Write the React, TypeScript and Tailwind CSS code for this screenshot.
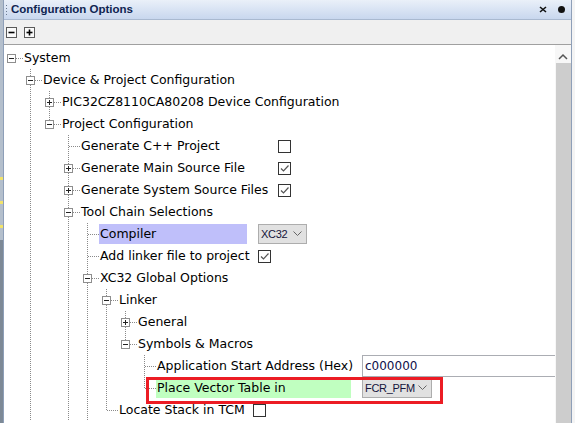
import React from 'react'

type Value =
  | { kind: 'check'; checked: boolean }
  | { kind: 'combo'; text: string; width: string }
  | { kind: 'field'; text: string }

interface TreeRow {
  label: string
  level: number
  lines: number[]
  last?: boolean
  toggle?: 'open' | 'closed'
  labelW?: string
  highlight?: string
  value?: Value
}

const rows: TreeRow[] = [
  { label: 'System', level: 0, lines: [], toggle: 'open' },
  { label: 'Device & Project Configuration', level: 1, lines: [], toggle: 'open' },
  { label: 'PIC32CZ8110CA80208 Device Configuration', level: 2, lines: [1], toggle: 'closed' },
  { label: 'Project Configuration', level: 2, lines: [1], toggle: 'open', last: true },
  { label: 'Generate C++ Project', level: 3, lines: [1], labelW: 'w-[187px]', value: { kind: 'check', checked: false } },
  { label: 'Generate Main Source File', level: 3, lines: [1], toggle: 'closed', labelW: 'w-[187px]', value: { kind: 'check', checked: true } },
  { label: 'Generate System Source Files', level: 3, lines: [1], toggle: 'closed', labelW: 'w-[187px]', value: { kind: 'check', checked: true } },
  { label: 'Tool Chain Selections', level: 3, lines: [1], toggle: 'open' },
  { label: 'Compiler', level: 4, lines: [1, 3], labelW: 'w-[148px]', highlight: 'bg-[#bfbffa]', value: { kind: 'combo', text: 'XC32', width: 'w-[49px]' } },
  { label: 'Add linker file to project', level: 4, lines: [1, 3], labelW: 'w-[148px]', value: { kind: 'check', checked: true } },
  { label: 'XC32 Global Options', level: 4, lines: [1, 3], toggle: 'open' },
  { label: 'Linker', level: 5, lines: [1, 3, 4], toggle: 'open' },
  { label: 'General', level: 6, lines: [1, 3, 4, 5], toggle: 'closed' },
  { label: 'Symbols & Macros', level: 6, lines: [1, 3, 4, 5], toggle: 'open', last: true },
  { label: 'Application Start Address (Hex)', level: 7, lines: [1, 3, 4, 5], labelW: 'w-[195px]', value: { kind: 'field', text: 'c000000' } },
  { label: 'Place Vector Table in', level: 7, lines: [1, 3, 4, 5], last: true, labelW: 'w-[195px]', highlight: 'bg-[#c0ffc0]', value: { kind: 'combo', text: 'FCR_PFM', width: 'w-[70px]' } },
  { label: 'Locate Stack in TCM', level: 5, lines: [1, 3, 4], last: true, labelW: 'w-[124px]', value: { kind: 'check', checked: false } },
]

const DOT = '#8a8a8a'

// one 19px column of tree guides
const GuideCell: React.FC<{ mode: 'line' | 'none' | 'tee' | 'corner' | 'root'; toggle?: 'open' | 'closed' }> = ({ mode, toggle }) => (
  <svg width="19" height="22" className="shrink-0 block">
    {mode === 'line' && <line x1="7.5" y1="0" x2="7.5" y2="22" stroke={DOT} strokeDasharray="1 1" />}
    {(mode === 'tee' || mode === 'corner') && (
      <line x1="7.5" y1="0" x2="7.5" y2={mode === 'tee' ? 22 : 12} stroke={DOT} strokeDasharray="1 1" />
    )}
    {mode !== 'line' && mode !== 'none' && (
      <line x1="8" y1="11.5" x2="19" y2="11.5" stroke={DOT} strokeDasharray="1 1" />
    )}
    {toggle && (
      <g>
        <rect x="3.5" y="7.5" width="8" height="8" fill="#fff" stroke="#8e8e8e" />
        <line x1="5" y1="11.5" x2="10" y2="11.5" stroke="#222" />
        {toggle === 'closed' && <line x1="7.5" y1="9" x2="7.5" y2="14" stroke="#222" />}
      </g>
    )}
  </svg>
)

const CheckBox: React.FC<{ checked: boolean }> = ({ checked }) => (
  <svg width="13" height="13" className="block shrink-0">
    <rect x="0.5" y="0.5" width="12" height="12" fill="#fff" stroke="#333" />
    {checked && <polyline points="3,6.5 5.5,9 10.5,3.5" fill="none" stroke="#555" strokeWidth="1.2" />}
  </svg>
)

const Chevron = () => (
  <svg width="9" height="6" className="block shrink-0">
    <polyline points="0.5,0.5 4.5,4.5 8.5,0.5" fill="none" stroke="#666" />
  </svg>
)

const ValueCell: React.FC<{ value: Value }> = ({ value }) => {
  if (value.kind === 'check') return <CheckBox checked={value.checked} />
  if (value.kind === 'combo') {
    return (
      <div className={`${value.width} h-[20px] border border-[#adadad] bg-[#e1e1e1] flex items-center justify-between pl-[2px] pr-[4px] text-[#14143a] font-['Liberation_Sans',Arial,sans-serif] text-[11px] tracking-[-0.3px]`}>
        <span>{value.text}</span>
        <Chevron />
      </div>
    )
  }
  return (
    <div className="w-[260px] h-[22px] border border-[#abadb3] bg-white flex items-center pl-[2px] text-[#10104a] text-[12px]">
      {value.text}
    </div>
  )
}

const Row: React.FC<{ row: TreeRow }> = ({ row }) => {
  const cells: React.ReactNode[] = []
  for (let k = 0; k <= row.level; k++) {
    if (k === row.level) {
      const mode = k === 0 ? 'root' : row.last ? 'corner' : 'tee'
      cells.push(<GuideCell key={k} mode={mode} toggle={row.toggle} />)
    } else {
      cells.push(<GuideCell key={k} mode={row.lines.includes(k) ? 'line' : 'none'} />)
    }
  }

  return (
    <div className="flex items-center h-[22px] whitespace-nowrap">
      {cells}
      {row.value ? (
        <>
          <div className={`${row.labelW} h-[20px] leading-[20px] pl-[1px] shrink-0 ${row.highlight ?? ''}`}>
            {row.label}
          </div>
          <div className="ml-[11px] shrink-0">
            <ValueCell value={row.value} />
          </div>
        </>
      ) : (
        <span className="pl-[1px]">{row.label}</span>
      )}
    </div>
  )
}

const ToolButton: React.FC<{ plus?: boolean }> = ({ plus }) => (
  <svg width="11" height="11" className="block">
    <rect x="0.5" y="0.5" width="10" height="10" fill="#fafafa" stroke="#5a5a5a" />
    <line x1="2.5" y1="5.5" x2="8.5" y2="5.5" stroke="#000" strokeWidth="1.6" />
    {plus && <line x1="5.5" y1="2.5" x2="5.5" y2="8.5" stroke="#000" strokeWidth="1.6" />}
  </svg>
)

export default function App() {
  return (
    <div className="relative w-[575px] h-[423px] overflow-hidden flex bg-[#f0f0f0] font-['DejaVu_Sans',Verdana,sans-serif] text-[12.5px] text-black">
      {/* edge of the neighbouring window */}
      <div className="w-[3px] flex flex-col shrink-0">
        <div className="h-[240px] bg-[#b4bfcc] flex flex-col">
          <div className="h-[177px]" />
          <div className="h-[3px] bg-[#f2e36a]" />
          <div className="h-[21px]" />
          <div className="h-[3px] bg-[#f2e36a]" />
          <div className="h-[21px]" />
          <div className="h-[3px] bg-[#f2e36a]" />
        </div>
        <div className="flex-1 bg-[#7d8996]" />
      </div>

      <div className="w-[569px] flex flex-col border-x border-[#8e9fb8] shrink-0">
        {/* title bar */}
        <div className="h-[20px] flex items-center bg-gradient-to-b from-[#eaf0f9] to-[#c8d7ee] border-b border-[#a9b9d0] shrink-0">
          <div className="ml-[1px] w-[3px] flex flex-col gap-[2px] items-center">
            {[0, 1, 2, 3].map(i => (
              <div key={i} className="w-[1px] h-[1px] bg-[#6b7a90]" />
            ))}
          </div>
          <span className="ml-[3px] font-bold text-[11.5px] text-[#0f2451] font-['Liberation_Sans',Arial,sans-serif]">Configuration Options</span>
          <div className="ml-auto flex items-center gap-[11px] pr-[6px]">
            <svg width="8" height="7" className="block">
              <path d="M1 1 L7 6 M7 1 L1 6" stroke="#111" strokeWidth="1.6" />
            </svg>
            <div className="w-[7px] h-[7px] rounded-full bg-[#111]" />
          </div>
        </div>

        {/* toolbar */}
        <div className="h-[25px] flex items-center gap-[7px] pl-[2px] bg-[#f0f0f0] border-b border-[#a0a0a0] shrink-0">
          <ToolButton />
          <ToolButton plus />
        </div>

        {/* tree + scrollbar */}
        <div className="flex-1 flex bg-white min-h-0">
          <div className="flex-1 overflow-hidden pt-[2px]">
            {rows.map((row, i) => (
              <Row key={i} row={row} />
            ))}
          </div>
          <div className="w-[16px] flex flex-col items-center shrink-0 bg-[#f7f7f7]">
            <svg width="10" height="7" className="block mt-[8px]">
              <polyline points="1,6 5,2 9,6" fill="none" stroke="#555" strokeWidth="1.5" />
            </svg>
            <div className="mt-[3px] w-[15px] flex-1 bg-[#cdcdcd]" />
          </div>
        </div>
      </div>

      <div className="flex-1 bg-[#f4f4f4]" />

      {/* red call-out around the edited option */}
      <div className="absolute left-[146px] top-[377px] w-[297px] h-[27px] border-[3px] border-[#ec1c24]" />
    </div>
  )
}
